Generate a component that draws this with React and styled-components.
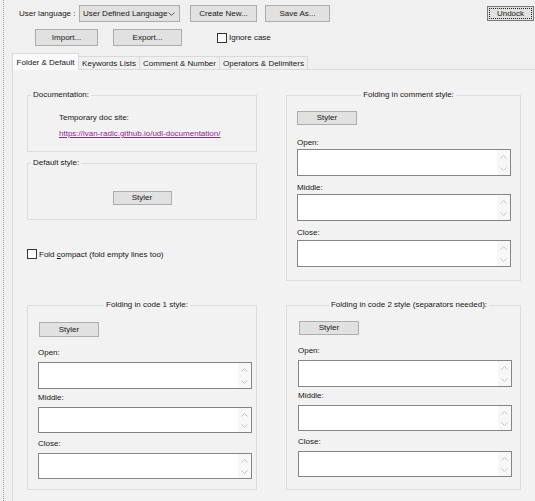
import React from "react";
import styled, { createGlobalStyle } from "styled-components";

const Global = createGlobalStyle`
  html, body { margin: 0; padding: 0; background: #f0f0f0; overflow: hidden; }
  #root { width: 535px; height: 501px; }
  * { box-sizing: border-box; }
`;

const PANEL_BG = "#f2f2f2";

const Page = styled.div`
  width: 532px;
  height: 501px;
  margin-left: 3px;
  border-left: 1px dotted #9a9a9a;
  background: #f0f0f0;
  font-family: "Liberation Sans", Arial, sans-serif;
  font-size: 8px;
  color: #161616;
  display: flex;
  flex-direction: column;
  overflow: hidden;
`;

const TopRow = styled.div`
  display: flex;
  align-items: center;
  height: 17px;
  margin-top: 5px;
  padding-left: 15px;
`;

const SecondRow = styled.div`
  display: flex;
  align-items: center;
  height: 17px;
  margin-top: 7px;
  padding-left: 31px;
`;

const Caption = styled.span`
  width: 60px;
  white-space: nowrap;
`;

const Combo = styled.div`
  width: 101px;
  height: 17px;
  border: 1px solid #adadad;
  background: #e1e1e1;
  display: flex;
  align-items: center;
  justify-content: space-between;
  padding: 0 4px 0 3px;
  white-space: nowrap;
`;

const Button = styled.button`
  width: ${(p) => p.$w}px;
  height: ${(p) => p.$h || 17}px;
  margin-left: ${(p) => p.$ml || 0}px;
  margin-top: ${(p) => p.$mt || 0}px;
  align-self: ${(p) => p.$align || "auto"};
  flex-shrink: 0;
  border: 1px solid #adadad;
  background: #e1e1e1;
  font: inherit;
  color: inherit;
  padding: 0;
  line-height: 1;
`;

const DefaultButton = styled(Button)`
  margin-left: auto;
  margin-right: 1px;
  border-color: #7a7a7a;
  outline: 1px dotted #222;
  outline-offset: -3px;
`;

const CheckLine = styled.label`
  display: flex;
  align-items: center;
  margin-left: ${(p) => p.$ml || 0}px;
  margin-top: ${(p) => p.$mt || 0}px;
  white-space: nowrap;
`;

const CheckBox = styled.span`
  width: 10px;
  height: 10px;
  border: 1px solid #333;
  background: #fff;
  margin-right: 2px;
  flex-shrink: 0;
`;

const TabStrip = styled.div`
  display: flex;
  align-items: flex-end;
  height: 16px;
  margin-top: 7px;
  margin-left: 8px;
`;

const Tab = styled.div`
  position: relative;
  width: ${(p) => p.$w}px;
  height: ${(p) => (p.$active ? 17 : 13)}px;
  margin-left: ${(p) => (p.$first ? 0 : -1)}px;
  margin-bottom: ${(p) => (p.$active ? -1 : 0)}px;
  z-index: ${(p) => (p.$active ? 1 : 0)};
  border: 1px solid #d9d9d9;
  border-bottom: none;
  background: ${(p) => (p.$active ? "#fbfbfb" : "#f0f0f0")};
  display: flex;
  align-items: center;
  justify-content: center;
  white-space: nowrap;
`;

const Panel = styled.div`
  flex: 1;
  margin-left: 8px;
  border-top: 1px solid #d9d9d9;
  border-left: 1px solid #d9d9d9;
  background: ${PANEL_BG};
  padding: 25px 0 0 14px;
`;

const Grid = styled.div`
  display: grid;
  grid-template-columns: 230px 235px;
  grid-template-rows: 186px 185px;
  column-gap: 29px;
  row-gap: 24px;
`;

const Stack = styled.div`
  display: flex;
  flex-direction: column;
`;

const GroupBox = styled.div`
  height: ${(p) => p.$h}px;
  margin-top: ${(p) => p.$mt || 0}px;
  border: 1px solid #dcdcdc;
  display: flex;
  flex-direction: column;
  padding-left: ${(p) => p.$pl || 0}px;
`;

const Legend = styled.div`
  align-self: ${(p) => (p.$center ? "center" : "flex-start")};
  margin-top: -6px;
  margin-left: ${(p) => (p.$center ? 0 : 3 - (p.$pl || 0))}px;
  line-height: 10px;
  padding: 0 2px;
  background: ${PANEL_BG};
  white-space: nowrap;
`;

const DocBody = styled.div`
  padding-left: 31px;
  display: flex;
  flex-direction: column;
`;

const Line = styled.div`
  line-height: 10px;
  margin-top: ${(p) => p.$mt || 0}px;
  white-space: nowrap;
`;

const Link = styled.a`
  color: #8a2a8c;
  text-decoration: underline;
  line-height: 10px;
  margin-top: 6px;
  white-space: nowrap;
`;

const FieldLabel = styled.div`
  line-height: 10px;
  margin-top: ${(p) => p.$mt}px;
`;

const TextBox = styled.div`
  width: 214px;
  height: ${(p) => p.$h}px;
  margin-top: ${(p) => p.$mt}px;
  border: 1px solid #858585;
  background: #fff;
  display: flex;
`;

const TextArea = styled.textarea`
  flex: 1;
  border: none;
  outline: none;
  resize: none;
  background: transparent;
  font: inherit;
  padding: 1px 2px;
`;

const Spin = styled.div`
  width: 13px;
  background: #f7f7f7;
  display: flex;
  flex-direction: column;
  justify-content: space-between;
  align-items: center;
  padding: 5px 0 4px;
`;

const Chevron = ({ up, color = "#c4c4c4", w = 7, h = 4 }) => (
  <svg width={w} height={h} viewBox="0 0 7 4" style={{ display: "block" }}>
    <polyline
      points={up ? "0.5,3.5 3.5,0.5 6.5,3.5" : "0.5,0.5 3.5,3.5 6.5,0.5"}
      fill="none"
      stroke={color}
      strokeWidth="1"
    />
  </svg>
);

const Field = ({ label, lmt, bmt, h }) => (
  <>
    <FieldLabel $mt={lmt}>{label}</FieldLabel>
    <TextBox $mt={bmt} $h={h}>
      <TextArea />
      <Spin>
        <Chevron up />
        <Chevron />
      </Spin>
    </TextBox>
  </>
);

const FoldGroup = ({ title, pl, btn, fields }) => (
  <GroupBox $h={fields.h} $pl={pl}>
    <Legend $center>{title}</Legend>
    <Button $w={60} $h={btn.h} $mt={btn.mt} $ml={btn.ml} $align="flex-start">
      Styler
    </Button>
    {fields.list.map((f) => (
      <Field key={f.label} {...f} />
    ))}
  </GroupBox>
);

const commentFields = {
  h: 186,
  list: [
    { label: "Open:", lmt: 13, bmt: 1, h: 27 },
    { label: "Middle:", lmt: 7, bmt: 1, h: 27 },
    { label: "Close:", lmt: 7, bmt: 2, h: 27 },
  ],
};

const codeFields = {
  h: 185,
  list: [
    { label: "Open:", lmt: 11, bmt: 4, h: 27 },
    { label: "Middle:", lmt: 4, bmt: 4, h: 26 },
    { label: "Close:", lmt: 6, bmt: 4, h: 26 },
  ],
};

const tabs = [
  { label: "Folder & Default", w: 67, active: true },
  { label: "Keywords Lists", w: 62 },
  { label: "Comment & Number", w: 81 },
  { label: "Operators & Delimiters", w: 89 },
];

export default function App() {
  return (
    <>
      <Global />
      <Page>
        <TopRow>
          <Caption>User language :</Caption>
          <Combo>
            <span>User Defined Language</span>
            <Chevron color="#555" />
          </Combo>
          <Button $w={67} $ml={10}>Create New...</Button>
          <Button $w={65} $ml={8}>Save As...</Button>
          <DefaultButton $w={47} $h={15}>Undock</DefaultButton>
        </TopRow>
        <SecondRow>
          <Button $w={63}>Import...</Button>
          <Button $w={69} $ml={15}>Export...</Button>
          <CheckLine $ml={35}>
            <CheckBox />
            Ignore case
          </CheckLine>
        </SecondRow>
        <TabStrip>
          {tabs.map((t, i) => (
            <Tab key={t.label} $w={t.w} $active={t.active} $first={i === 0}>
              {t.label}
            </Tab>
          ))}
        </TabStrip>
        <Panel>
          <Grid>
            <Stack>
              <GroupBox $h={57}>
                <Legend>Documentation:</Legend>
                <DocBody>
                  <Line $mt={13}>Temporary doc site:</Line>
                  <Link href="#">https://ivan-radic.github.io/udl-documentation/</Link>
                </DocBody>
              </GroupBox>
              <GroupBox $h={57} $mt={11}>
                <Legend>Default style:</Legend>
                <Button $w={59} $h={14} $mt={23} $align="center">
                  Styler
                </Button>
              </GroupBox>
              <CheckLine $mt={29}>
                <CheckBox />
                <span>
                  Fold <u>c</u>ompact (fold empty lines too)
                </span>
              </CheckLine>
            </Stack>
            <FoldGroup
              title="Folding in comment style:"
              pl={10}
              btn={{ h: 14, mt: 11, ml: 0 }}
              fields={commentFields}
            />
            <FoldGroup
              title="Folding in code 1 style:"
              pl={10}
              btn={{ h: 15, mt: 12, ml: 1 }}
              fields={codeFields}
            />
            <FoldGroup
              title="Folding in code 2 style (separators needed):"
              pl={11}
              btn={{ h: 14, mt: 11, ml: 1 }}
              fields={codeFields}
            />
          </Grid>
        </Panel>
      </Page>
    </>
  );
}
